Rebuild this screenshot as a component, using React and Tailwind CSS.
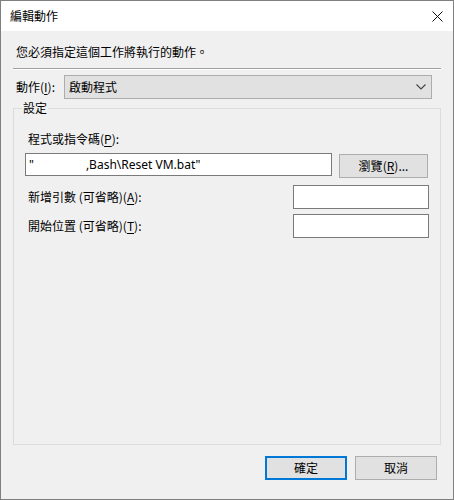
import React from "react";

const cjk = "font-['Noto_Sans_CJK_TC',sans-serif]";

function Key({ k }) {
  return (
    <span>
      (<span className="underline underline-offset-2 decoration-1">{k}</span>)
    </span>
  );
}

function TextBox({ className = "", children }) {
  return (
    <div className={`bg-white border border-[#7a7a7a] ${className}`}>{children}</div>
  );
}

export default function App() {
  return (
    <div className={`w-[454px] h-[500px] border border-[#7f7f7f] flex flex-col text-[12px] text-black ${cjk}`}>
      {/* title bar */}
      <div className="h-[30px] bg-white flex items-center justify-between pl-[9px] pr-[10px]">
        <span className="leading-4">編輯動作</span>
        <svg width="11" height="11" viewBox="0 0 11 11" className="mt-[1px]">
          <path d="M0.5 0.5 L10.5 10.5 M10.5 0.5 L0.5 10.5" stroke="#111" strokeWidth="1" />
        </svg>
      </div>

      <div className="flex-1 bg-[#f0f0f0] flex flex-col">
        <div className="mt-[13px] ml-[15px] leading-4">您必須指定這個工作將執行的動作。</div>

        <div className="mt-[8px] ml-[12px] w-[428px]">
          <div className="h-px bg-[#a0a0a0]" />
          <div className="h-px bg-white" />
        </div>

        {/* action combo */}
        <div className="mt-[5px] flex items-center">
          <span className="ml-[15px] w-[48px] leading-4">
            動作<Key k="I" />:
          </span>
          <div className="w-[368px] h-[24px] bg-[#e1e1e1] border border-[#adadad] flex items-center justify-between pl-[4px] pr-[4px]">
            <span className="leading-4">啟動程式</span>
            <svg width="10" height="6" viewBox="0 0 10 6" className="mr-[1px]">
              <path d="M0.5 0.5 L5 5 L9.5 0.5" fill="none" stroke="#444" strokeWidth="1.1" />
            </svg>
          </div>
        </div>

        {/* settings group */}
        <div className="relative mt-[9px] ml-[12px] w-[428px] h-[337px] border border-[#dcdcdc] flex flex-col">
          <span className="absolute left-[8px] top-[-9px] px-[1px] bg-[#f0f0f0] leading-4">設定</span>

          <div className="mt-[22px] ml-[14px] leading-4">
            程式或指令碼<Key k="P" />:
          </div>

          <div className="mt-[6px] ml-[11px] flex items-start">
            <TextBox className="w-[307px] h-[23px] flex items-center pl-[3px]">
              <span className="font-['Noto_Sans','Liberation_Sans',sans-serif] text-[12px] leading-4 whitespace-pre">
                {'"'}
                <span className="inline-block w-[52px]" />
                {',Bash\\Reset VM.bat"'}
              </span>
            </TextBox>
            <button className="ml-[7px] mt-[1px] w-[89px] h-[24px] bg-[#e1e1e1] border border-[#adadad] leading-4">
              瀏覽<Key k="R" />...
            </button>
          </div>

          <div className="mt-[7px] ml-[14px] mr-[11px] flex items-center justify-between">
            <span className="leading-4">
              新增引數 (可省略)<Key k="A" />:
            </span>
            <TextBox className="w-[136px] h-[24px]" />
          </div>

          <div className="mt-[5px] ml-[14px] mr-[11px] flex items-center justify-between">
            <span className="leading-4">
              開始位置 (可省略)<Key k="T" />:
            </span>
            <TextBox className="w-[136px] h-[24px]" />
          </div>
        </div>

        {/* dialog buttons */}
        <div className="mt-[11px] mr-[16px] flex justify-end gap-[8px]">
          <button className="w-[82px] h-[24px] bg-[#e1e1e1] border-2 border-[#0078d7] leading-4">確定</button>
          <button className="w-[82px] h-[24px] bg-[#e1e1e1] border border-[#adadad] leading-4">取消</button>
        </div>
      </div>
    </div>
  );
}
